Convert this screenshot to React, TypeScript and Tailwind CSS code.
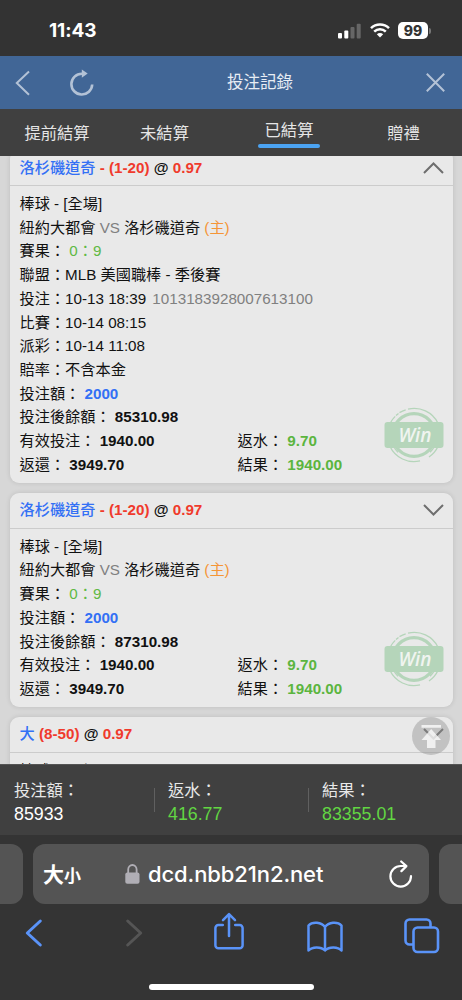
import type { ReactNode } from "react";

type BetType = {
  team: string;
  line: string;
  odds: string;
  open?: boolean;
  balance: string;
};

const bets: BetType[] = [
  { team: "洛杉磯道奇", line: "- (1-20)", odds: "0.97", open: true, balance: "85310.98" },
  { team: "洛杉磯道奇", line: "- (1-20)", odds: "0.97", balance: "87310.98" },
  { team: "大", line: "(8-50)", odds: "0.97", balance: "89310.98" },
];

const totals = [
  { label: "投注額：", value: "85933", className: "w-[154px] pl-[14px] text-white" },
  { label: "返水：", value: "416.77", className: "w-[154px] pl-[14px] text-[#62d643]" },
  { label: "結果：", value: "83355.01", className: "w-[154px] pl-[14px] text-[#62d643]" },
];

function StatusBar() {
  return (
    <div className="flex h-14 shrink-0 items-center bg-[#333333] pt-[5px] pl-[49px] font-['Inter',sans-serif] text-white">
      <span className="w-[289px] text-[19px] leading-6 font-bold tracking-[-0.1px]">11:43</span>
      <svg width="24" height="16" viewBox="0 0 24 16" fill="#fff">
        <rect x="0" y="10" width="4" height="5.5" rx="1" />
        <rect x="6.3" y="7.5" width="4" height="8" rx="1" />
        <rect x="12.5" y="4" width="4" height="11.5" rx="1" fill="#666" />
        <rect x="18.7" y="0.7" width="4" height="14.8" rx="1" fill="#666" />
      </svg>
      <svg className="ml-2" width="20" height="15" viewBox="0 0 20 15" fill="none" stroke="#fff" strokeWidth="2.5">
        <path d="M1 5.2C6 .3 14 .3 19 5.2M4.2 8.6c3.3-3.2 8.3-3.2 11.6 0" />
        <path d="M6.8 11.2c1.9-1.6 4.5-1.6 6.4 0L10 14.5z" fill="#fff" stroke="none" />
      </svg>
      <span className="ml-[8px] flex h-[17px] w-[30px] items-center justify-center rounded-[5px] bg-white text-[14px] leading-none font-extrabold text-[#333]">
        99
      </span>
      <span className="ml-px h-[6px] w-[2px] rounded-r-full bg-[#777]" />
    </div>
  );
}

function Header() {
  return (
    <header className="flex h-[53px] shrink-0 items-center justify-between bg-[#416696] pr-[17px] pl-[15px]">
      <div className="flex w-[79px] items-center justify-between">
        <svg width="15" height="26" viewBox="0 0 15 26" fill="none" stroke="#b3c2d6" strokeWidth="2">
          <path d="M14 1.5L1.8 13 14 24.8" />
        </svg>
        <svg width="24" height="27" viewBox="0 0 24 27" fill="none" stroke="#b3c2d6" strokeWidth="2.6">
          <path d="M22.2 15.5A10.4 10.4 0 1 1 12 4.7h2" />
          <path d="M11.8.6L17.7 4.6 11.8 8.8z" fill="#b3c2d6" stroke="none" />
        </svg>
      </div>
      <h1 className="mr-[75px] ml-[75px] text-[16.5px] whitespace-nowrap text-[#e8edf4]">投注記錄</h1>
      <svg width="19" height="19" viewBox="0 0 19 19" stroke="#b3c2d6" strokeWidth="2">
        <path d="M.8.8l17.4 17.4M18.2.8L.8 18.2" />
      </svg>
    </header>
  );
}

function Tabs() {
  return (
    <nav className="flex h-[47px] shrink-0 items-center bg-[#404040] text-center text-[16.3px] leading-6 text-[#e6e6e6]">
      <span className="w-[114px]">提前結算</span>
      <span className="w-[101px]">未結算</span>
      <span className="flex w-[148px] flex-col items-center">
        已結算
        <span className="mt-[2px] h-1 w-[62px] rounded-sm bg-[#4ba3f2]" />
      </span>
      <span className="w-[81px]">贈禮</span>
    </nav>
  );
}

function WinStamp() {
  return (
    <svg className="absolute top-[-22px] right-[9px]" width="60" height="56" viewBox="0 0 60 56" fill="none" stroke="#b5d5ba">
      <circle cx="30" cy="28" r="21.3" strokeWidth="3.2" />
      <path
        strokeWidth="1.3"
        d="M12 8.5l2.5-2.1M15.5 5.6a26.5 26.5 0 0 1 6.2-2.8M24 2.2a26.5 26.5 0 0 1 30 14M6 16.5A26.5 26.5 0 0 1 11.2 9.4M6 39.5A26.5 26.5 0 0 0 36 53.9M45 50a26.5 26.5 0 0 0 9-10.5M10 40a23.5 23.5 0 0 0 4 5.4M46 45.3a23.5 23.5 0 0 0 4.6-6"
      />
      <rect x="0.5" y="15" width="59" height="26" rx="3" fill="#b5d5ba" stroke="none" />
      <text x="31" y="35" textAnchor="middle" fill="#f0f4f0" stroke="none" fontFamily="Open Sans" fontSize="19" fontStyle="italic" fontWeight="600">
        Win
      </text>
    </svg>
  );
}

function Row({ label, children }: { label?: string; children?: ReactNode }) {
  return (
    <p className="h-[23.72px] whitespace-nowrap">
      {label}
      {children}
    </p>
  );
}

function BetCard({ bet }: { bet: BetType }) {
  return (
    <article className="shrink-0 rounded-[9px] bg-[#e9e9e9] pb-[6px] text-[15.2px] leading-[23.7px] text-[#111] shadow-[0_0_5px_rgba(0,0,0,0.12)]">
      <div className="flex h-[36px] items-center justify-between border-b border-[#cccccc] pr-[9px] pl-[10px] font-bold">
        <p>
          <span className="font-medium text-[#3370f5]">{bet.team}</span>{" "}
          <span className="text-[#f03a2c]">{bet.line}</span> @{" "}
          <span className="text-[#f03a2c]">{bet.odds}</span>
        </p>
        <svg width="21" height="12" viewBox="0 0 21 12" fill="none" stroke="#6e6e6e" strokeWidth="2">
          <path d={bet.open ? "M1 11l9.5-9.5L20 11" : "M1 1l9.5 9.5L20 1"} />
        </svg>
      </div>
      <div className="pt-[6px] pl-[10px]">
        <Row>棒球 - [全場]</Row>
        <Row>
          紐約大都會 <span className="text-[#808080]">VS</span> 洛杉磯道奇{" "}
          <span className="text-[#f59536]">(主)</span>
        </Row>
        <Row label="賽果：">
          {" "}
          <span className="text-[#5fb944]">0：9</span>
        </Row>
        {bet.open && (
          <>
            <Row label="聯盟：">MLB 美國職棒 - 季後賽</Row>
            <Row label="投注：">
              10-13 18:39 <span className="ml-[2px] text-[#808080]">1013183928007613100</span>
            </Row>
            <Row label="比賽：">10-14 08:15</Row>
            <Row label="派彩：">10-14 11:08</Row>
            <Row label="賠率：">不含本金</Row>
          </>
        )}
        <Row label="投注額：">
          {" "}
          <b className="text-[#3370f5]">2000</b>
        </Row>
        <Row label="投注後餘額：">
          {" "}
          <b>{bet.balance}</b>
        </Row>
        <div className="relative grid grid-cols-[218px_1fr]">
          <Row label="有效投注：">
            {" "}
            <b>1940.00</b>
          </Row>
          <Row label="返水：">
            {" "}
            <b className="text-[#5bb53f]">9.70</b>
          </Row>
          <Row label="返還：">
            {" "}
            <b>3949.70</b>
          </Row>
          <Row label="結果：">
            {" "}
            <b className="text-[#5bb53f]">1940.00</b>
          </Row>
          <WinStamp />
        </div>
      </div>
    </article>
  );
}

function BackToTop() {
  return (
    <svg className="absolute right-[12px] bottom-[9px]" width="38" height="38" viewBox="0 0 38 38">
      <circle cx="19" cy="19" r="19" fill="#8c8c8c" fillOpacity="0.42" />
      <path d="M9.5 8h19.5v2.8H9.5zM19.2 12l9.8 11h-5.5v8h-8.5v-8H9.5z" fill="#fff" fillOpacity="0.75" />
    </svg>
  );
}

function Totals() {
  return (
    <section className="flex h-[71px] shrink-0 items-start border-t border-[#555] bg-[#404040] pt-[13px]">
      {totals.map((item, i) => (
        <div key={item.label} className={`relative ${item.className}`}>
          {i > 0 && <span className="absolute top-[10px] left-0 h-6 w-px bg-[#606060]" />}
          <p className="text-[16.3px] leading-6 text-[#e8e8e8]">{item.label}</p>
          <p className="text-[17.8px] leading-6">{item.value}</p>
        </div>
      ))}
    </section>
  );
}

function SafariBar() {
  return (
    <footer className="flex h-[165px] shrink-0 flex-col bg-[#343434] pt-[9px] text-[#5a93f8]">
      {/* Address bar with the neighbouring tabs peeking in */}
      <div className="flex h-[60px] gap-[10px] overflow-hidden">
        <div className="w-[23px] shrink-0 rounded-r-[12px] bg-[#545454]" />
        <div className="flex w-[396px] shrink-0 items-center rounded-[12px] bg-[#545454] pr-[16px] pl-[10px] text-white">
          <span className="flex w-[82px] items-baseline font-bold">
            <span className="text-[21px] leading-none">大</span>
            <span className="text-[17px] leading-none">小</span>
          </span>
          <svg width="15" height="20" viewBox="0 0 15 20" fill="#b0aeb5">
            <rect x="0.3" y="8.5" width="14.2" height="11.3" rx="2" />
            <path d="M3.2 9V5.5a4.2 4.5 0 0 1 8.4 0V9" fill="none" stroke="#b0aeb5" strokeWidth="1.8" />
          </svg>
          <span className="ml-[8px] flex-1 font-['Inter',sans-serif] text-[22px] font-medium tracking-[-0.1px] whitespace-nowrap">
            dcd.nbb21n2.net
          </span>
          <svg width="24" height="28" viewBox="0 0 24 28" fill="none" stroke="#fff" strokeWidth="2.2" strokeLinecap="round" strokeLinejoin="round">
            <path d="M22 16.2A10.3 10.3 0 1 1 11.8 6h5.4M12.2 1.5l5.2 4.6-5 5" />
          </svg>
        </div>
        <div className="w-[30px] shrink-0 rounded-l-[12px] bg-[#545454]" />
      </div>
      <div className="flex h-[58px] items-center pl-[25px]" >
        <svg width="18" height="30" viewBox="0 0 18 30" fill="none" stroke="currentColor" strokeWidth="3" strokeLinecap="round" strokeLinejoin="round">
          <path d="M15.3 3L2.3 15l13 12" />
        </svg>
        <svg className="ml-[82px] text-[#555]" width="18" height="30" viewBox="0 0 18 30" fill="none" stroke="currentColor" strokeWidth="3" strokeLinecap="round" strokeLinejoin="round">
          <path d="M2.7 3l13 12-13 12" />
        </svg>
        <svg className="ml-[70px] mb-1" width="32" height="38" viewBox="0 0 32 38" fill="none" stroke="currentColor" strokeWidth="2.5" strokeLinecap="round" strokeLinejoin="round">
          <path d="M9.8 13H5.4a3 3 0 0 0-3 3v17.3a3 3 0 0 0 3 3h21.2a3 3 0 0 0 3-3V16a3 3 0 0 0-3-3h-4.4M16 24V2.5M10 8.2l6-6 6 6" />
        </svg>
        <svg className="ml-[61px] mt-2" width="38" height="32" viewBox="0 0 38 32" fill="none" stroke="currentColor" strokeWidth="2.5" strokeLinejoin="round">
          <path d="M19 6C15.5 1 6.5.2 2.5 4.5v25C6 25.5 15 25.3 19 29.5c4-4.2 13-4 16.5 0v-25C31.500.2 22.500 1 19 6zM19 6v23" />
        </svg>
        <svg className="ml-[60px] mt-[6px]" width="36" height="36" viewBox="0 0 36 36" fill="none" stroke="currentColor" strokeWidth="2.6">
          <path d="M9.500 26.5H5.500a4 4 0 0 1-4-4v-17a4 4 0 0 1 4-4h17a4 4 0 0 1 4 4v4" />
          <rect x="9.500" y="9.500" width="24.500" height="24.500" rx="4" />
        </svg>
      </div>
      <div className="mx-auto mt-[22px] h-[6px] w-[165px] rounded-full bg-white" />
    </footer>
  );
}

export default function App() {
  return (
    <div className="flex h-[1000px] w-[462px] flex-col overflow-hidden font-['Liberation_Sans','Noto_Sans_CJK_TC',sans-serif]">
      <StatusBar />
      <Header />
      <Tabs />
      <main className="relative h-[608px] shrink-0 overflow-hidden bg-[#d7d7d7] px-[9.5px]">
        <div className="-mt-[6px] flex flex-col gap-[10px]">
          {bets.map((bet, i) => (
            <BetCard key={i} bet={bet} />
          ))}
        </div>
        <BackToTop />
      </main>
      <Totals />
      <SafariBar />
    </div>
  );
}
